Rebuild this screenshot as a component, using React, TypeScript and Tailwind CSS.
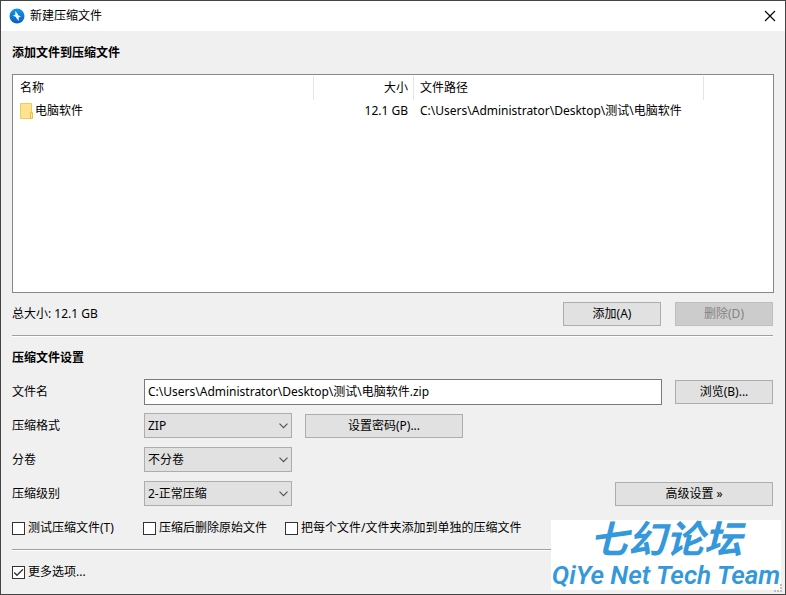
import type { ReactNode } from "react";

const files = [
  {
    name: "电脑软件",
    size: "12.1 GB",
    path: "C:\\Users\\Administrator\\Desktop\\测试\\电脑软件",
  },
];

const btn =
  "h-6 shrink-0 border border-[#adadad] bg-[#e1e1e1] leading-4 text-black disabled:border-[#bfbfbf] disabled:bg-[#cccccc] disabled:text-[#838383]";

function Divider() {
  return <div className="mr-px h-[2px] border-t border-[#a0a0a0] bg-white" />;
}

function Row({ label, id, children }: { label: string; id: string; children: ReactNode }) {
  return (
    <div className="flex h-[26px] items-center">
      <label htmlFor={id} className="w-[132px] shrink-0">
        {label}
      </label>
      {children}
    </div>
  );
}

function Select({ id, options }: { id: string; options: string[] }) {
  return (
    <div className="relative w-[148px] shrink-0 self-start">
      <select
        id={id}
        className="block h-[25px] w-full appearance-none border border-[#adadad] bg-[#e1e1e1] px-[3px] leading-4"
      >
        {options.map((o) => (
          <option key={o}>{o}</option>
        ))}
      </select>
      <svg
        viewBox="0 0 9 6"
        className="pointer-events-none absolute top-[10px] right-1 h-[6px] w-[9px]"
        fill="none"
        stroke="#505050"
        strokeWidth="1.1"
      >
        <path d="M0.5 0.7 4.5 4.7 8.5 0.7" />
      </svg>
    </div>
  );
}

function Check({ label, checked }: { label: string; checked?: boolean }) {
  return (
    <label className="flex items-center gap-[3px]">
      <span className="grid">
        <input
          type="checkbox"
          defaultChecked={checked}
          className="peer col-start-1 row-start-1 size-[13px] appearance-none border border-[#333333] bg-white"
        />
        <svg
          viewBox="0 0 13 13"
          className="pointer-events-none invisible col-start-1 row-start-1 size-[13px] peer-checked:visible"
          fill="none"
          stroke="#333333"
          strokeWidth="1.3"
        >
          <path d="M2.2 6.5 5 9.3 11 3.3" />
        </svg>
      </span>
      {label}
    </label>
  );
}

export default function App() {
  return (
    <div className="relative flex min-h-screen flex-col border border-[#444444] bg-[#f0f0f0] font-['Noto_Sans','Noto_Sans_CJK_SC',sans-serif] text-xs leading-4 text-black">
      {/* Title bar */}
      <header className="flex h-[30px] items-center bg-white pr-[9px] pl-2">
        <svg viewBox="0 0 16 16" className="mr-[5px] size-4">
          <defs>
            <linearGradient id="logo" x1="0" y1="0" x2="0" y2="1">
              <stop offset="0" stopColor="#1597e5" />
              <stop offset="1" stopColor="#0560c4" />
            </linearGradient>
          </defs>
          <circle cx="8" cy="8" r="7.5" fill="url(#logo)" />
          <path d="M6.2 3 8.8 6 8.9 7.2 12 8.2 9.6 9.4 9.9 13 7.2 10 7.1 8.9 4 7.8 6.4 6.6Z" fill="#fff" />
        </svg>
        <h1>新建压缩文件</h1>
        <button aria-label="关闭" className="ml-auto">
          <svg viewBox="0 0 12 12" className="size-3" stroke="#000" strokeWidth="1.1">
            <path d="M1 1 11 11M11 1 1 11" />
          </svg>
        </button>
      </header>

      <main className="flex flex-col px-[11px] pt-[14px]">
        <h2 className="font-bold">添加文件到压缩文件</h2>

        <div className="mt-[13px] h-[219px] border border-[#828790] bg-white">
          <table className="w-full table-fixed border-collapse">
            <colgroup>
              <col className="w-[301px]" />
              <col className="w-[100px]" />
              <col className="w-[290px]" />
              <col />
            </colgroup>
            <thead>
              <tr className="h-[26px]">
                <th className="p-0 text-left font-normal">
                  <div className="h-6 border-r border-[#e5e5e5] pl-[7px] leading-6">名称</div>
                </th>
                <th className="p-0 text-right font-normal">
                  <div className="h-6 border-r border-[#e5e5e5] pr-[5px] leading-6">大小</div>
                </th>
                <th className="p-0 text-left font-normal">
                  <div className="h-6 border-r border-[#e5e5e5] pl-[6px] leading-6">文件路径</div>
                </th>
                <th />
              </tr>
            </thead>
            <tbody>
              {files.map((f) => (
                <tr key={f.path} className="h-5">
                  <td className="p-0">
                    <div className="flex items-center gap-[2px] pl-[7px]">
                      <svg viewBox="0 0 13 16" className="h-4 w-[13px]">
                        <path d="M0.5 0.5H11.5V15.5H0.5Z" fill="#ffe391" stroke="#f0cb5a" />
                        <path d="M10.5 9.5H12.5V15.5H10.5Z" fill="#ffe9a6" stroke="#e8bf45" />
                      </svg>
                      {f.name}
                    </div>
                  </td>
                  <td className="p-0 pr-[6px] text-right">{f.size}</td>
                  <td className="p-0 pl-[6px] whitespace-nowrap">{f.path}</td>
                  <td />
                </tr>
              ))}
            </tbody>
          </table>
        </div>

        <div className="mt-[9px] mr-px mb-[9px] flex items-center">
          <span className="mr-auto">总大小: 12.1 GB</span>
          <button className={`${btn} mr-[14px] w-[98px]`}>添加(A)</button>
          <button className={`${btn} w-[98px]`} disabled>
            删除(D)
          </button>
        </div>

        <Divider />

        <h2 className="mt-[13px] mb-[13px] font-bold">压缩文件设置</h2>

        <div className="mr-px flex flex-col gap-2">
          <Row label="文件名" id="filename">
            <input
              id="filename"
              type="text"
              defaultValue={"C:\\Users\\Administrator\\Desktop\\测试\\电脑软件.zip"}
              className="mr-[13px] h-[26px] min-w-0 flex-1 border border-[#7a7a7a] bg-white px-[3px] pb-[2px]"
            />
            <button className={`${btn} w-[98px]`}>浏览(B)...</button>
          </Row>
          <Row label="压缩格式" id="format">
            <Select id="format" options={["ZIP", "7Z", "TAR"]} />
            <button className={`${btn} ml-[13px] w-[158px]`}>设置密码(P)...</button>
          </Row>
          <Row label="分卷" id="volume">
            <Select id="volume" options={["不分卷"]} />
          </Row>
          <Row label="压缩级别" id="level">
            <Select id="level" options={["2-正常压缩"]} />
            <button className={`${btn} ml-auto w-[158px]`}>高级设置 »</button>
          </Row>
        </div>

        <div className="mt-[13px] mb-[13px] grid grid-cols-[131px_142px_1fr] whitespace-nowrap">
          <Check label="测试压缩文件(T)" />
          <Check label="压缩后删除原始文件" />
          <Check label="把每个文件/文件夹添加到单独的压缩文件" />
        </div>

        <Divider />

        <div className="mt-[13px] flex">
          <Check label="更多选项..." checked />
        </div>
      </main>

      {/* Watermark */}
      <div className="absolute right-1 bottom-1 flex h-[70px] w-[230px] flex-col items-center bg-white font-['Roboto','Noto_Sans_CJK_SC',sans-serif] font-bold whitespace-nowrap text-[#3498db] italic">
        <span className="text-[38px] leading-10">七幻论坛</span>
        <span className="text-[26px] leading-[30px] font-semibold">QiYe Net Tech Team</span>
      </div>

      {/* Resize grip */}
      <svg viewBox="0 0 8 8" className="absolute right-[3px] bottom-[2px] size-2" fill="#bfbfbf">
        <path d="M6 0h2v2H6zM6 3h2v2H6zM0 6h2v2H0zM3 6h2v2H3zM6 6h2v2H6z" />
      </svg>
    </div>
  );
}
